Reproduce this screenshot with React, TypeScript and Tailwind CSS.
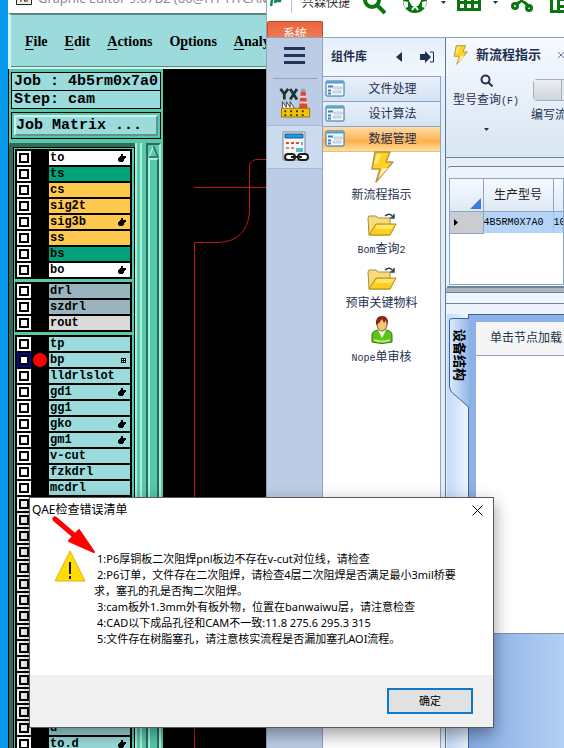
import type { ReactNode } from "react";

type Layer = {
  name: string;
  tone: string;
  mark?: "hand" | "grid";
  active?: boolean;
};

const AQUA = "bg-[#9bdbdb]";
const MINT = "bg-[#00a37a]";
const AMBER = "bg-[#ffc84f]";
const STEEL = "bg-[#9ab4be]";

const BOARD_LAYERS: Layer[] = [
  { name: "to", tone: "bg-white", mark: "hand" },
  { name: "ts", tone: MINT },
  { name: "cs", tone: AMBER },
  { name: "sig2t", tone: AMBER },
  { name: "sig3b", tone: AMBER, mark: "hand" },
  { name: "ss", tone: AMBER },
  { name: "bs", tone: MINT },
  { name: "bo", tone: "bg-white", mark: "hand" },
];

const DRILL_LAYERS: Layer[] = [
  { name: "drl", tone: STEEL },
  { name: "szdrl", tone: STEEL },
  { name: "rout", tone: "bg-[#dadada]" },
];

const MISC_LAYERS: Layer[] = [
  { name: "tp", tone: AQUA },
  { name: "bp", tone: AQUA, mark: "grid", active: true },
  { name: "lldrlslot", tone: AQUA },
  { name: "gd1", tone: AQUA, mark: "hand" },
  { name: "gg1", tone: AQUA },
  { name: "gko", tone: AQUA, mark: "hand" },
  { name: "gm1", tone: AQUA, mark: "hand" },
  { name: "v-cut", tone: AQUA },
  { name: "fzkdrl", tone: AQUA },
  { name: "mcdrl", tone: AQUA },
  ...Array.from({ length: 14 }, () => ({ name: "", tone: AQUA })),
  { name: "d", tone: AQUA },
  { name: "to.d", tone: AQUA, mark: "hand" },
];

// [before, hotkey letter, after]
const MENUS = [
  ["", "F", "ile"],
  ["", "E", "dit"],
  ["", "A", "ctions"],
  ["O", "p", "tions"],
  ["", "A", "nalysis"],
];

const MESSAGES = [
  "1:P6厚铜板二次阻焊pnl板边不存在v-cut对位线，请检查",
  "2:P6订单，文件存在二次阻焊，请检查4层二次阻焊是否满足最小3mil桥要求，塞孔的孔是否掏二次阻焊。",
  "3:cam板外1.3mm外有板外物，位置在banwaiwu层，请注意检查",
  "4:CAD以下成品孔径和CAM不一致:11.8 275.6 295.3 315",
  "5:文件存在树脂塞孔，请注意核实流程是否漏加塞孔AOI流程。",
];

function HandMark() {
  return (
    <svg width="8" height="8" viewBox="0 0 8 8" shapeRendering="crispEdges">
      <path d="M3 0h2v2h3v2h-1v1h-1v2h-1v1h-4v-1h-1v-3h1v-1h1v-1h1z" fill="#000" />
    </svg>
  );
}

function GridMark() {
  return (
    <svg width="5" height="5" viewBox="0 0 5 5" shapeRendering="crispEdges">
      <path d="M0 0h5v5h-5z" fill="#000" />
      <path d="M1 1h1v1h-1zM3 1h1v1h-1zM1 3h1v1h-1zM3 3h1v1h-1z" fill="#fff" />
    </svg>
  );
}

function LayerRow({ layer }: { layer: Layer }) {
  return (
    <label className="flex h-4 pb-0.5">
      <span
        className={`flex size-3.5 items-center justify-center ${layer.active ? "bg-[#000a9a]" : "bg-white"}`}
      >
        <input
          type="checkbox"
          className="size-[10px] appearance-none border-2 border-black bg-white"
        />
      </span>
      <span className="flex w-[18px] items-center justify-center">
        {layer.active && <span className="size-3.5 shrink-0 rounded-full bg-[#ff0000]" />}
      </span>
      <span
        className={`flex flex-1 items-center justify-between pr-1 pl-px text-[12px] leading-[14px] font-bold ${layer.tone}`}
      >
        {layer.name}
        {layer.mark === "hand" && <HandMark />}
        {layer.mark === "grid" && <GridMark />}
      </span>
    </label>
  );
}

function LayerGroup({ layers }: { layers: Layer[] }) {
  return (
    <div className="bg-black px-0.5 pt-0.5">
      {layers.map((layer, i) => (
        <LayerRow key={i} layer={layer} />
      ))}
    </div>
  );
}

function LayerPanel() {
  return (
    <div className="flex w-[155px] shrink-0 flex-col border-l border-black bg-[#58caab] font-['Liberation_Mono',monospace] text-black">
      <div className="mx-0.5 mt-[3px] border border-black bg-[#9bdbdb] text-[15px] leading-[17px] font-bold">
        <p className="border-b border-black pl-0.5 whitespace-nowrap">Job : 4b5rm0x7a0</p>
        <p className="pl-0.5">Step: cam</p>
      </div>
      <div className="mx-0.5 mt-[3px] border border-black p-0.5">
        <button
          type="button"
          className="block h-[21px] w-full border-2 border-t-[#c9f3ee] border-r-[#5d9494] border-b-[#5d9494] border-l-[#c9f3ee] bg-[#9bdbdb] text-left text-[15px] leading-[17px] font-bold"
        >
          Job Matrix ...
        </button>
      </div>
      <div className="mt-1 flex min-h-0 flex-1">
        <div className="w-[126px] overflow-hidden border-t-4 border-l-4 border-[#2f6a5c]">
          <div className="flex flex-col gap-[3px] border border-b-0 border-black bg-[#58caab] p-px pr-0.5">
            <LayerGroup layers={BOARD_LAYERS} />
            <LayerGroup layers={DRILL_LAYERS} />
            <LayerGroup layers={MISC_LAYERS} />
          </div>
        </div>
        <div className="w-0.5 bg-[#a9efdb]" />
        <div className="w-[3px] bg-[#58caab]" />
        <div className="w-0.5 bg-[#a9efdb]" />
        <div className="w-1 bg-[#58caab]" />
        <div className="flex w-[15px] flex-col border-t-2 border-r-2 border-l-2 border-t-[#2f6a5c] border-r-[#a9efdb] border-l-[#2f6a5c]">
          <svg width="11" height="13" viewBox="0 0 11 13">
            <path d="M5.500 1L10 12H1Z" fill="#58caab" />
            <path d="M5.500 1L1 12" stroke="#a9efdb" strokeWidth="1.500" />
            <path d="M5.500 1L10 12H1" fill="none" stroke="#2f6a5c" strokeWidth="1.500" />
          </svg>
          <div className="flex-1 border-t-2 border-r-2 border-l-2 border-t-[#a9efdb] border-r-[#2f6a5c] border-l-[#a9efdb] bg-[#50caaa]" />
        </div>
      </div>
    </div>
  );
}

function EditorWindow() {
  return (
    <section className="absolute -top-4 bottom-0 left-2 flex w-[258px] flex-col bg-white">
      <header className="flex h-[29px] shrink-0 items-center gap-1.5 overflow-hidden pl-2 font-['Noto_Sans',sans-serif] text-[13px] whitespace-nowrap text-[#8c8c8c]">
        <svg width="16" height="16" viewBox="0 0 16 16" className="shrink-0">
          <path d="M0.500 0.500h15v13h-15z" fill="#f5f0dc" stroke="#222" />
          <path d="M3 4h5M5 4v7M8 10l4-5M8 10h4" stroke="#222" fill="none" />
        </svg>
        Graphic Editor 9.07B2 (60@HY-HYCAM
      </header>
      <nav className="flex h-14 shrink-0 items-center gap-[17px] overflow-hidden border-t-2 border-b-2 border-l-3 border-t-[#5d8484] border-b-[#d5f3f0] border-l-[#d5f3f0] bg-[#9bdbdb] pl-3.5 font-['Liberation_Serif',serif] text-[14px] font-bold text-black shadow-[inset_0_-1px_#5d8484]">
        {MENUS.map(([before, hotkey, after], i) => (
          <button key={i} type="button" className="whitespace-nowrap">
            {before}
            <span className="underline underline-offset-3">{hotkey}</span>
            {after}
          </button>
        ))}
      </nav>
      <div className="flex min-h-0 flex-1 bg-black">
        <LayerPanel />
        <svg width="103" height="679" viewBox="0 0 103 679" fill="none" stroke="#c01818">
          <path d="M31 118.500H103" />
          <path d="M103 90.500H94Q86.500 91 86.500 98V143Q84 173 54 173.500H31.500V679" />
        </svg>
      </div>
    </section>
  );
}

function Bolt({ className }: { className: string }) {
  return (
    <svg viewBox="0 0 24 32" className={className}>
      <path
        d="M5 1h15l-4 10h7L6 31l4-13H2z"
        fill="#ffd21f"
        stroke="#b99545"
        strokeWidth="1.500"
        strokeLinejoin="round"
      />
      <path d="M12 17h6L8 28l4-10z" fill="#fff2b0" />
      <path d="M7 3h4L8 13H4z" fill="#ffe97a" />
    </svg>
  );
}

function Folder() {
  return (
    <svg viewBox="0 0 30 24" className="h-6 w-[30px]">
      <path d="M1 5l1-2h7l2 2h12v17H2z" fill="#f6dc7c" stroke="#a98e36" />
      <path d="M2 22l7-11h20l-6 11z" fill="#ffcf1f" stroke="#b08b16" />
      <path d="M10 12h17l-2 4H8z" fill="#ffe574" />
      <path d="M18 3q5-4 8 1M27 1v4h-4" fill="none" stroke="#2d3f57" strokeWidth="1.500" />
    </svg>
  );
}

function Person() {
  return (
    <svg viewBox="0 0 22 30" className="h-[30px] w-[22px]">
      <path d="M1 27V20q0-4 6-5h8q6 1 6 5v7q-10 3-20 0z" fill="#5fc21c" stroke="#287708" />
      <path d="M7 15l4 8 4-8z" fill="#f3f6dc" />
      <path d="M3 25q8 3 16 0" stroke="#b5ee6a" strokeWidth="2" fill="none" />
      <ellipse cx="11" cy="9" rx="5" ry="7" fill="#f4c774" stroke="#8a551d" />
      <path d="M5 10Q4 1 11 1t6 9l-2-5-2 3-2-4-3 4z" fill="#892416" />
    </svg>
  );
}

function FormIcon() {
  return (
    <svg viewBox="0 0 20 18" className="h-[18px] w-5">
      <rect x="1" y="1" width="18" height="15" rx="1" fill="#f4f9ff" stroke="#2e6f9e" />
      <path d="M1.500 2.500h17" stroke="#4b9ccb" strokeWidth="2" />
      <path d="M3 6.500h5M3 10.500h3M3 13.500h3" stroke="#3f7fb0" strokeWidth="2" />
      <path d="M9 7h8v2h-8zM8 11h8v2h-8z" fill="#dde8f3" stroke="#8ca7c0" strokeWidth="0.500" />
    </svg>
  );
}

function FactoryIcon() {
  return (
    <svg viewBox="0 0 32 32" className="h-[31px] w-8">
      <path d="M1 2l4 5 4-5M5 7v6M11 2l7 11M18 2l-7 11" stroke="#17382f" strokeWidth="2.800" fill="none" />
      <path d="M22 5h5l2 18h-9z" fill="#d9473b" />
      <path d="M21 10h7M21 16h8" stroke="#f4d5d0" strokeWidth="2" />
      <path d="M22 3q2-3 5 0v2h-5z" fill="#9aa0a8" />
      <path d="M3 23V15l4 6v-6l4 6v-6l5 8z" fill="#fff" stroke="#444" />
      <path d="M2 22h29v9H2z" fill="#f2c40c" stroke="#9c7a00" />
      <path d="M5 24h2v2H5zM11 24h2v2h-2zM17 24h2v2h-2zM23 24h2v2h-2zM5 28h2v2H5zM11 28h2v2h-2zM17 28h2v2h-2zM23 28h2v2h-2z" fill="#443500" />
    </svg>
  );
}

function CalculatorIcon() {
  return (
    <svg viewBox="0 0 30 32" className="h-8 w-[30px]">
      <path d="M3 1h22v28H3z" fill="#f4f5f7" stroke="#7b8390" />
      <path d="M5 3h18v4H5z" fill="#2596df" stroke="#145c94" />
      <path d="M6 11h3v2H6zM11 11h3v2h-3zM16 11h3v2h-3z" fill="#d8512c" />
      <path d="M6 16h3v2H6zM11 16h3v2h-3z" fill="#d98d62" />
      <path d="M21 11h2v3h-2zM16 17h7v4h-7z" fill="#54bcd4" />
      <g fill="none" stroke="#1c1c1c" strokeWidth="2">
        <rect x="5" y="23" width="10" height="6" rx="3" fill="#fff" />
        <rect x="18" y="23" width="10" height="6" rx="3" fill="#fff" />
        <path d="M11 26h11" />
      </g>
    </svg>
  );
}

function Caret() {
  return (
    <svg viewBox="0 0 5 3" className="h-[3px] w-[5px] shrink-0">
      <path d="M0 0h5L2.500 3z" fill="#1e3050" />
    </svg>
  );
}

function TitleTools() {
  return (
    <header className="flex h-[37px] shrink-0 items-center overflow-hidden bg-white whitespace-nowrap">
      <svg viewBox="0 0 14 22" className="ml-0.5 h-[22px] w-3.5 shrink-0" fill="none" stroke="#16865b" strokeWidth="2.500">
        <path d="M2 14L4 2h8l-1 7H7M7 6l-1 5" />
      </svg>
      <span className="ml-2 h-5 border-l border-[#b9c0ca]" />
      <span className="ml-2.5 w-12 text-[12px] text-[#333]">兴森快捷</span>
      <svg viewBox="0 0 24 24" className="ml-3 size-6 shrink-0" fill="none" stroke="#0a760f" strokeWidth="4">
        <circle cx="10" cy="9" r="7" />
        <path d="M15 14l8 8" />
      </svg>
      <svg viewBox="0 0 26 24" className="ml-4 h-6 w-[26px] shrink-0">
        <circle cx="13" cy="10" r="12" fill="#0a760f" />
        <path d="M7 4h12v6l-3 5h-6l-3-5zM1 10l5 1v5l-3 1zM25 10l-5 1v5l3 1z" fill="#fff" />
        <path d="M10 19l3-4 3 4" fill="none" stroke="#fff" strokeWidth="2" />
      </svg>
      <span className="ml-[13px]"><Caret /></span>
      <svg viewBox="0 0 24 24" className="ml-[11px] size-6 shrink-0" fill="none" stroke="#0a760f" strokeWidth="3">
        <path d="M1.500 0v18.500h21V0M1 4.500h22M1 11.500h22M8.500 0v18M15.500 0v18" />
      </svg>
      <span className="ml-3"><Caret /></span>
      <svg viewBox="0 0 24 24" className="ml-3 size-6 shrink-0" fill="none" stroke="#0a760f" strokeWidth="3">
        <path d="M21 1L6 14M9 7l11 9" />
        <circle cx="5" cy="15" r="2.500" />
        <circle cx="19" cy="17" r="2.500" />
      </svg>
      <svg viewBox="0 0 24 24" className="ml-4 size-6 shrink-0" fill="none" stroke="#0a760f" strokeWidth="3">
        <path d="M1.500 1.500h21v19h-21zM8.500 2v18M9 8.500h14M9 15.500h14" />
      </svg>
    </header>
  );
}

function Sidebar() {
  return (
    <nav className="flex w-14 shrink-0 flex-col items-center border-r border-[#8fa3c6] bg-[#bccce5]">
      <button type="button" aria-label="菜单" className="mt-[9px] flex w-[21px] flex-col gap-1">
        <span className="h-[3px] bg-[#1f3559]" />
        <span className="h-[3px] bg-[#1f3559]" />
        <span className="h-[3px] bg-[#1f3559]" />
      </button>
      <span className="mt-3.5 w-11 border-t border-[#8fa3c6]" />
      <button type="button" aria-label="YX" className="mt-2 flex h-[38px] items-start">
        <FactoryIcon />
      </button>
      <button
        type="button"
        aria-label="计算"
        className="flex h-11 w-full items-center justify-center border-y border-[#a5b8d6] bg-[#cddbf0]"
      >
        <CalculatorIcon />
      </button>
    </nav>
  );
}

function LibraryItem({ icon, children }: { icon: ReactNode; children: ReactNode }) {
  return (
    <button type="button" className="flex h-[54px] w-full flex-col items-center justify-end">
      {icon}
      <span className="mt-1 h-4 leading-4">{children}</span>
    </button>
  );
}

function LibraryPanel() {
  const sections = ["文件处理", "设计算法", "数据管理"];

  return (
    <aside className="flex w-[122px] shrink-0 flex-col bg-[#e3edf8] text-[12px] text-[#1e3050]">
      <div className="flex h-[38px] items-center bg-linear-to-b from-[#e4eefa] to-[#f3f8fe] pl-2">
        <h2 className="flex-1 font-bold">组件库</h2>
        <button type="button" aria-label="收起">
          <svg viewBox="0 0 6 10" className="h-2.5 w-1.5">
            <path d="M6 0v10L0 5z" fill="#1e3050" />
          </svg>
        </button>
        <button type="button" aria-label="固定" className="mr-2.5 ml-[18px]">
          <svg viewBox="0 0 15 12" className="h-3 w-[15px]">
            <path d="M0 3h5V0l6 6-6 6V9H0z" fill="#1e3050" />
            <path d="M10 1h3.500v10H10" fill="none" stroke="#1e3050" />
          </svg>
        </button>
      </div>
      <div className="mr-1 flex-1 border-t border-r border-[#8da4c4] bg-white">
        {sections.map((name) => (
          <button
            key={name}
            type="button"
            className={`flex h-[25px] w-full items-center border-b pl-0.5 ${
              name === "数据管理"
                ? "border-[#d9c28f] bg-linear-to-b from-[#ffdca4] via-[#fdb04c] via-60% to-[#ffdf9a]"
                : "border-[#8da4c4] bg-linear-to-b from-[#e9f1fb] to-[#d3e2f3]"
            }`}
          >
            <FormIcon />
            <span className="flex-1">{name}</span>
          </button>
        ))}
        <div className="-mt-[3px]">
          <LibraryItem icon={<Bolt className="h-8 w-6" />}>新流程指示</LibraryItem>
          <LibraryItem icon={<Folder />}>
            <span className="font-['Liberation_Mono',monospace] text-[10px] leading-none">Bom</span>查询
            <span className="font-['Liberation_Mono',monospace] text-[10px] leading-none">2</span>
          </LibraryItem>
          <LibraryItem icon={<Folder />}>预审关键物料</LibraryItem>
          <LibraryItem icon={<Person />}>
            <span className="font-['Liberation_Mono',monospace] text-[10px] leading-none">Nope</span>单审核
          </LibraryItem>
        </div>
      </div>
    </aside>
  );
}

function Ribbon() {
  return (
    <div className="bg-linear-to-b from-[#f6faff] to-[#d9e5f2]">
      <div className="flex h-[33px] items-center overflow-hidden pl-[7px] whitespace-nowrap">
        <Bolt className="h-5 w-[15px] shrink-0" />
        <h1 className="ml-2 text-[13px] font-bold">新流程指示</h1>
        <button type="button" aria-label="关闭" className="ml-4">
          <svg viewBox="0 0 8 8" className="size-2" stroke="#6d7c94" fill="none">
            <path d="M1 1l6 6M7 1L1 7" />
          </svg>
        </button>
      </div>
      <div className="flex h-[86px] items-start gap-2.5 overflow-hidden pl-[7px] text-[12px] leading-4 whitespace-nowrap">
        <button type="button" className="flex flex-col items-center pt-[3px]">
          <svg viewBox="0 0 13 13" className="size-[13px]" fill="none" stroke="#1e3050" strokeWidth="2">
            <circle cx="5.500" cy="5.500" r="4" />
            <path d="M8.500 8.500l4 4" />
          </svg>
          <span className="mt-[5px] mb-5 h-4">
            型号查询
            <span className="font-['Liberation_Mono',monospace] text-[10px] leading-none">(F)</span>
          </span>
          <Caret />
        </button>
        <button type="button" className="flex flex-col pt-2">
          <span className="ml-1 flex h-[22px] w-12 rounded-sm border border-[#a4afbd] bg-[#e3e8ee]">
            <span className="w-7 border-r border-[#a4afbd] bg-linear-to-b from-[#ebeef2] to-[#cdd4dc]" />
          </span>
          <span className="mt-1.5">编写流程</span>
        </button>
      </div>
    </div>
  );
}

function ModelGrid() {
  return (
    <div className="h-[122px] rounded-tl border-t border-b-2 border-[#6d839c] bg-[#eef4fc] pt-[11px] pl-0.5">
      <div className="h-[107px] overflow-hidden border border-[#8da4c4] bg-white">
        <table className="w-[150px] table-fixed border-collapse text-left text-[12px] whitespace-nowrap">
          <thead>
            <tr className="h-8 bg-linear-to-b from-[#f6faff] to-[#dfe9f5]">
              <th className="w-[33px] border-r border-b border-[#8da4c4] p-0 align-bottom">
                <svg viewBox="0 0 11 11" className="mr-0.5 mb-0.5 ml-auto size-[11px]">
                  <path d="M11 0v11H0z" fill="#3c7bdc" />
                </svg>
              </th>
              <th className="w-[70px] border-r border-b border-[#8da4c4] p-0 text-center font-normal text-[#1a1a1a]">
                生产型号
              </th>
              <th className="border-b border-[#8da4c4]" />
            </tr>
          </thead>
          <tbody className="font-['Liberation_Mono',monospace] text-[10px] text-black">
            <tr className="h-[22px] bg-[#b5d5f8]">
              <td className="border-r border-b border-[#8da4c4] bg-[#c9cdd2] p-0 pl-1">
                <svg viewBox="0 0 4 7" className="h-[7px] w-1">
                  <path d="M0 0l4 3.500L0 7z" />
                </svg>
              </td>
              <td className="border-r border-[#a5c4ea] p-0">4B5RM0X7A0</td>
              <td className="p-0">10</td>
            </tr>
          </tbody>
        </table>
      </div>
    </div>
  );
}

function StructurePane() {
  return (
    <div className="flex min-h-0 flex-1 border-t border-[#6d839c] bg-[#eef4fc] pt-2.5 pl-px">
      <div className="relative w-[22px] shrink-0 border-r border-[#3e629c] bg-linear-to-r from-[#c2daf9] to-[#edf5ff]">
        <button
          type="button"
          className="absolute top-1 left-0.5 flex h-[90px] w-5 items-start justify-center pt-[11px] text-[13px] leading-4 font-bold text-black"
        >
          <svg viewBox="0 0 20 90" className="absolute inset-0 h-[90px] w-5">
            <defs>
              <linearGradient id="tab" x1="0" x2="1">
                <stop offset="0" stopColor="#dcebff" />
                <stop offset="1" stopColor="#94b6e8" />
              </linearGradient>
            </defs>
            <path d="M20 0.500H3Q0.500 0.500 0.500 3V68Q1 74 6 77L20 89.500Z" fill="url(#tab)" />
            <path d="M20 0.500H3Q0.500 0.500 0.500 3V68Q1 74 6 77L20 89.500" fill="none" stroke="#3e629c" />
          </svg>
          <span className="relative [text-orientation:sideways] [writing-mode:vertical-rl]">设备结构</span>
        </button>
      </div>
      <div className="flex min-w-0 flex-1 flex-col border-t border-[#3e629c] bg-[#8db1e4] pt-[7px]">
        <div className="ml-[7px] flex h-[312px] flex-col overflow-hidden border-b border-[#7891b5] bg-white">
          <p className="h-[34px] shrink-0 border-b border-[#8da4c4] bg-[#f5f5f5] pl-3.5 text-[12px] leading-[33px] whitespace-nowrap">
            单击节点加载，双击
          </p>
        </div>
        <div className="flex-1 bg-linear-to-r from-[#86ace4] to-[#b4cff5]" />
      </div>
    </div>
  );
}

function ProcessWindow() {
  return (
    <section className="absolute -top-4 right-0 bottom-0 left-[266px] flex flex-col border-l border-[#9aa3b0] bg-white text-[#1e3050]">
      <TitleTools />
      <div className="flex h-4 shrink-0">
        <button
          type="button"
          className="h-4 w-14 overflow-hidden rounded-t-xs border border-b-0 border-[#c2492a] bg-linear-to-b from-[#e9653f] to-[#f07a50] pt-1 text-[12px] leading-4 text-white"
        >
          系统
        </button>
      </div>
      <div className="flex min-h-0 flex-1 border-t border-[#8da4c4]">
        <Sidebar />
        <LibraryPanel />
        <main className="flex min-w-0 flex-1 flex-col overflow-hidden border-l border-[#5f7896] bg-[#eef4fc]">
          <Ribbon />
          <div className="h-[9px] shrink-0 border-t border-[#6d839c] bg-[#e6eff9]" />
          <div className="pl-px">
            <ModelGrid />
          </div>
          <div className="h-[5px] shrink-0 border-b border-[#6d839c] bg-[#a9b5c0]" />
          <div className="h-2.5 shrink-0" />
          <StructurePane />
        </main>
      </div>
    </section>
  );
}

function WarningDialog() {
  return (
    <section
      role="alertdialog"
      aria-labelledby="dialog-title"
      className="absolute top-[497px] left-[29px] flex w-[465px] flex-col border border-[#5a5a5a] bg-white font-['Noto_Sans','Noto_Sans_CJK_SC',sans-serif] text-black shadow-[0_6px_16px_rgba(0,0,0,0.4)]"
    >
      <header className="flex h-6 items-center justify-between pr-2.5 pl-0.5">
        <h2 id="dialog-title" className="text-[12px]">
          QAE检查错误清单
        </h2>
        <button type="button" aria-label="关闭">
          <svg viewBox="0 0 11 11" className="size-[11px]" stroke="#000" fill="none">
            <path d="M0.500 0.500l10 10M10.500 0.500l-10 10" />
          </svg>
        </button>
      </header>
      <div className="flex h-[153px] pt-[29px] pl-6">
        <svg viewBox="0 0 32 32" className="-mt-px size-8 shrink-0">
          <path d="M16 1L31 31H1Z" fill="#ffdd00" stroke="#e3ae1b" strokeLinejoin="round" />
          <path d="M16 12v12M16 26v3" stroke="#111" strokeWidth="2" />
        </svg>
        <ol className="ml-2 w-[366px] text-[11px] leading-4">
          {MESSAGES.map((message) => (
            <li key={message} className="indent-[3px]">
              {message}
            </li>
          ))}
        </ol>
      </div>
      <footer className="flex h-[52px] items-center justify-end bg-[#f0f0f0] pr-5">
        <button
          type="button"
          className="h-[26px] w-[86px] border-2 border-[#0f78cc] bg-[#e1e1e1] text-[11px]"
        >
          确定
        </button>
      </footer>
      <svg viewBox="0 0 44 40" className="absolute top-[18px] left-[22px] h-10 w-11">
        <path d="M3 3L24 21" stroke="#f00" strokeWidth="5" strokeLinecap="round" />
        <path d="M27 14L42 36L17 25Z" fill="#f00" stroke="#f00" strokeWidth="2" strokeLinejoin="round" />
      </svg>
    </section>
  );
}

export default function App() {
  return (
    <div className="relative h-screen w-full overflow-hidden bg-[#0499ea] font-['Liberation_Sans','Noto_Sans_CJK_SC',sans-serif]">
      <EditorWindow />
      <ProcessWindow />
      <WarningDialog />
    </div>
  );
}
